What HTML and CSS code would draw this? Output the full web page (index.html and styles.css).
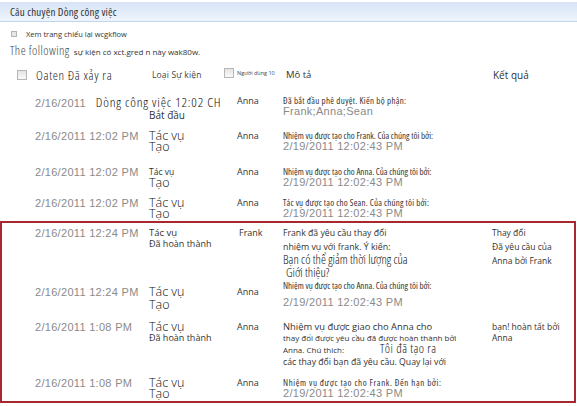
FILE: index.html
```html
<!doctype html>
<html>
<head>
<meta charset="utf-8">
<title>Câu chuyện Dòng công việc</title>
<link rel="stylesheet" href="styles.css">
</head>
<body>

<div class="bar">Câu chuyện Dòng công việc</div>

<div class="link"><span class="sq"></span>Xem trang chiếu lại wcgkflow</div>

<p class="intro"><span class="big">The following</span> <span class="tiny">sự kiện có xct.gred n này wak80w.</span></p>

<div class="grid head">
  <div class="c0"><span class="cb"></span></div>
  <div class="c1 h-big">Oaten Đã xảy ra</div>
  <div class="c2 h-type"><span>Loại Sự kiện</span><span class="cb cb2"></span></div>
  <div class="c3 h-user">Người dùng 10</div>
  <div class="c4 h-desc">Mô tả</div>
  <div class="c5 h-res">Kết quả</div>
</div>

<div class="grid row r1">
  <div></div>
  <div class="ln"><span class="d">2/16/2011</span><span class="wf">Dòng công việc 12:02 CH</span></div>
  <div class="type"><div class="ln blank"></div><div class="ln s10">Bắt đầu</div></div>
  <div class="ln s9">Anna</div>
  <div class="desc"><div class="ln c75 ls3">Đã bắt đầu phê duyệt. Kiến bộ phận:</div><div class="sub d">Frank;Anna;Sean</div></div>
  <div></div>
</div>

<div class="grid row r2">
  <div></div>
  <div class="ln d">2/16/2011 12:02 PM</div>
  <div class="type"><div class="ln lgn">Tác vụ</div><div class="ln2 lgn">Tạo</div></div>
  <div class="ln s9">Anna</div>
  <div class="desc"><div class="ln c75">Nhiệm vụ được tạo cho Frank. Của chúng tôi bởi:</div><div class="sub d">2/19/2011 12:02:43 PM</div></div>
  <div></div>
</div>

<div class="grid row r3">
  <div></div>
  <div class="ln d">2/16/2011 12:02 PM</div>
  <div class="type"><div class="ln s85">Tác vụ</div><div class="ln2 lgn">Tạo</div></div>
  <div class="ln s9">Anna</div>
  <div class="desc"><div class="ln c75">Nhiệm vụ được tạo cho Anna. Của chúng tôi bởi:</div><div class="sub d">2/19/2011 12:02:43 PM</div></div>
  <div></div>
</div>

<div class="grid row r4">
  <div></div>
  <div class="ln d">2/16/2011 12:02 PM</div>
  <div class="type"><div class="ln lgn">Tác vụ</div><div class="ln2 lgn">Tạo</div></div>
  <div class="ln s9">Anna</div>
  <div class="desc"><div class="ln c75 ls2">Tác vụ được tạo cho Sean. Của chúng tôi bởi:</div><div class="sub d">2/19/2011 12:02:43 PM</div></div>
  <div></div>
</div>

<div class="box">
  <div class="grid row r5">
    <div></div>
    <div class="ln d">2/16/2011 12:24 PM</div>
    <div class="type tight"><div class="s95">Tác vụ</div><div class="s9">Đã hoàn thành</div></div>
    <div class="ln s9 user-f">Frank</div>
    <div class="desc">
      <div class="ln s87">Frank đã yêu cầu thay đổi</div>
      <div class="ln gap s88">nhiệm vụ với frank. Ý kiến:</div>
      <div class="ln13 lg">Bạn có thể giảm thời lượng của</div>
      <div class="ln13 lg indent">Giới thiệu?</div>
    </div>
    <div class="res">
      <div class="ln s85">Thay đổi</div>
      <div class="ln gap s85">Đã yêu cầu của</div>
      <div class="ln gap s85">Anna bởi Frank</div>
    </div>
  </div>

  <div class="grid row r6">
    <div></div>
    <div class="ln d">2/16/2011 12:24 PM</div>
    <div class="type"><div class="ln lgn">Tác vụ</div><div class="ln2 lgn t-low">Tạo</div></div>
    <div class="ln s9">Anna</div>
    <div class="desc up"><div class="ln c75">Nhiệm vụ được tạo cho Anna. Của chúng tôi bởi:</div><div class="sub d far">2/19/2011 12:02:43 PM</div></div>
    <div></div>
  </div>

  <div class="grid row r7">
    <div></div>
    <div class="ln d">2/16/2011 1:08 PM</div>
    <div class="type tight"><div class="lgn">Tác vụ</div><div class="s9">Đã hoàn thành</div></div>
    <div class="ln s9">Anna</div>
    <div class="desc tight">
      <div class="s94">Nhiệm vụ được giao cho Anna cho</div>
      <div class="s8">thay đổi được yêu cầu đã được hoàn thành bởi</div>
      <div class="s8 split"><span class="lead">Anna. Chú thích:</span><span class="lg note">Tôi đã tạo ra</span></div>
      <div class="s87 gap">các thay đổi bạn đã yêu cầu. Quay lại với</div>
    </div>
    <div class="res tight">
      <div class="s85">bạn! hoàn tất bởi</div>
      <div class="s85">Anna</div>
    </div>
  </div>

  <div class="grid row r8">
    <div></div>
    <div class="ln d">2/16/2011 1:08 PM</div>
    <div class="type"><div class="ln lgn">Tác vụ</div><div class="ln2 lgn">Tạo</div></div>
    <div class="ln s9">Anna</div>
    <div class="desc"><div class="ln c75 ls6">Nhiệm vụ được tạo cho Frank. Đến hạn bởi:</div><div class="sub d">2/19/2011 12:02:43 PM</div></div>
    <div></div>
  </div>
</div>

</body>
</html>
```

FILE: styles.css
```css
body {
  margin: 0;
  width: 577px;
  font-family: "Open Sans", "Liberation Sans", sans-serif;
  color: #333;
}

/* title bar */
.bar {
  margin-top: 2px;
  height: 19px;
  line-height: 19px;
  padding-left: 10px;
  border-bottom: 1px solid #c3d3ea;
  background: linear-gradient(#d7e4f6, #eef4fc);
  font-size: 11px;
  font-stretch: 75%;
  letter-spacing: 0.2px;
  color: #333;
}

.link {
  margin-top: 6px;
  height: 12px;
  line-height: 12px;
  padding-left: 11px;
  font-size: 7.5px;
  color: #333;
  display: flex;
  align-items: center;
}
.sq {
  width: 4px;
  height: 4px;
  border: 1px solid #b4b4b4;
  background: #e6e6e6;
  margin-right: 9px;
}

.intro {
  margin: 2px 0 0;
  height: 14px;
  line-height: 14px;
  padding-left: 10px;
  white-space: nowrap;
}
.intro .big { font-size: 12.5px; font-stretch: 75%; font-weight: 300; letter-spacing: 0.45px; color: #444; }
.intro .tiny { font-size: 8px; color: #333; }

/* table grid */
.grid {
  display: grid;
  grid-template-columns: 35px 114px 88px 45px 210px 1fr;
  align-items: start;
}
.box .grid { grid-template-columns: 33px 114px 88px 45px 210px 1fr; }

.head {
  height: 39px;
  box-sizing: border-box;
  padding-top: 13px;
  line-height: 12px;
  white-space: nowrap;
}
.head .c0 { padding-left: 17px; height: 12px; display: flex; align-items: center; }
.cb {
  display: inline-block;
  width: 10px;
  height: 10px;
  box-sizing: border-box;
  border: 1px solid #b7b7b7;
  background: linear-gradient(#e4e4e4, #fafafa);
}
.h-big { font-size: 13px; font-stretch: 75%; font-weight: 300; letter-spacing: 0.65px; color: #222; padding-left: 1px; }
.h-type { display: flex; align-items: center; height: 12px; padding-left: 3px; padding-right: 3px; font-size: 8.5px; letter-spacing: 0.15px; color: #444; }
.h-type .cb2 { margin-left: auto; margin-top: -4px; }
.h-user { font-size: 5.5px; line-height: 8px; color: #444; }
.h-desc { font-size: 9.5px; padding-left: 4px; color: #333; }
.h-res { font-size: 10px; padding-left: 1px; color: #333; }

/* rows */
.row { white-space: nowrap; }
.r1 { height: 35px; }
.r2 { height: 36px; }
.r3 { height: 31px; }
.r4 { height: 24px; }
.r5 { height: 59px; }
.r6 { height: 35px; }
.r7 { height: 56px; }
.r8 { height: 22px; }

.ln { line-height: 12px; }
.ln2 { line-height: 10px; }
.ln13 { line-height: 13px; }
.blank { height: 14px; }
.sub { line-height: 9px; }
.gap { margin-top: 2px; }
.tight { line-height: 11px; }
.indent { padding-left: 3px; }
.desc { padding-left: 1px; }
.up { margin-top: -6px; }
.far { margin-top: 6px; }
.t-low { margin-top: 2px; }
.user-f { padding-left: 2px; }
.split { display: flex; align-items: baseline; }
.split .lead { width: 97px; }

/* text styles */
.d {
  font-family: "Liberation Sans", Arial, sans-serif;
  font-size: 11px;
  letter-spacing: 0.3px;
  color: #8a8a8a;
}
.lg { font-size: 12.5px; font-stretch: 75%; font-weight: 300; color: #111; }
.lgn { font-size: 12.5px; font-weight: 300; color: #111; }
.note { letter-spacing: 0.45px; }
.wf { font-size: 13.5px; font-stretch: 75%; font-weight: 300; letter-spacing: 0.8px; color: #111; margin-left: 10px; }
.s8 { font-size: 8px; }
.s85 { font-size: 8.5px; }
.s87 { font-size: 8.7px; }
.s88 { font-size: 8.8px; }
.s9 { font-size: 9px; }
.s94 { font-size: 9.4px; }
.s95 { font-size: 9.5px; }
.s10 { font-size: 10px; }
.c75 { font-size: 9px; font-stretch: 75%; }
.ls2 { letter-spacing: 0.2px; }
.ls3 { letter-spacing: 0.3px; }
.ls6 { letter-spacing: 0.6px; }

/* highlighted block */
.box {
  margin-right: 1px;
  border: 2px solid #a8282e;
  padding: 4px 0 2px;
}
```
